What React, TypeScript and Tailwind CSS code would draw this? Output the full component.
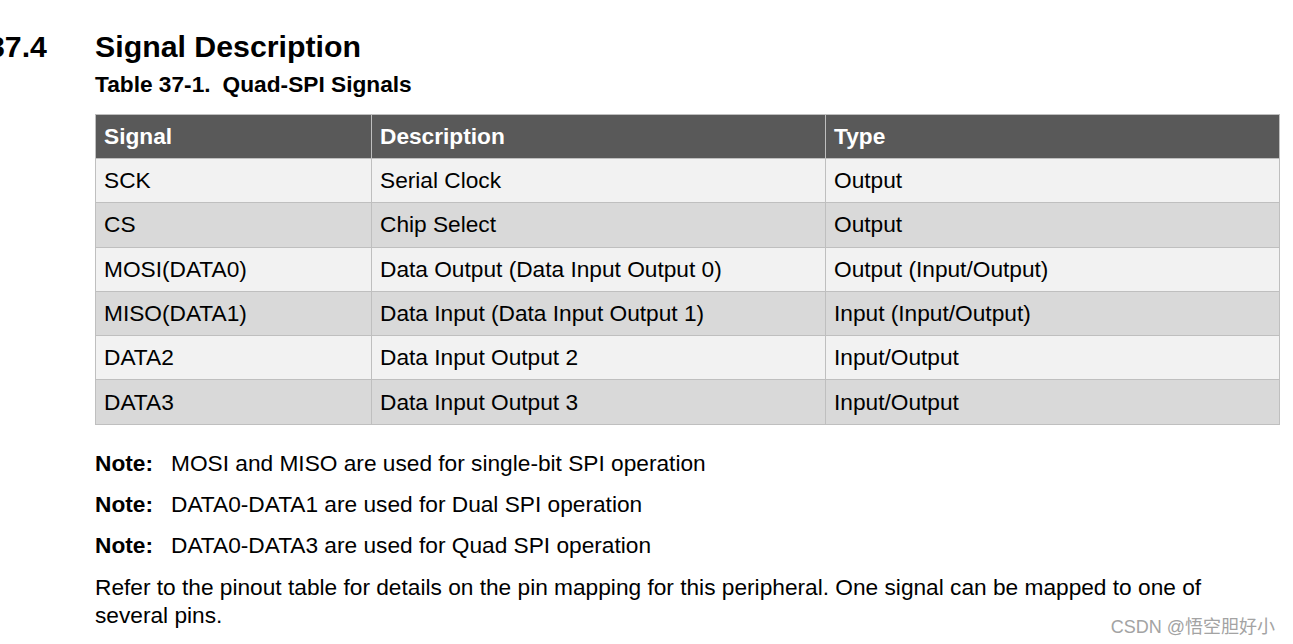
import React from 'react';

const rows = [
  ['SCK', 'Serial Clock', 'Output'],
  ['CS', 'Chip Select', 'Output'],
  ['MOSI(DATA0)', 'Data Output (Data Input Output 0)', 'Output (Input/Output)'],
  ['MISO(DATA1)', 'Data Input (Data Input Output 1)', 'Input (Input/Output)'],
  ['DATA2', 'Data Input Output 2', 'Input/Output'],
  ['DATA3', 'Data Input Output 3', 'Input/Output'],
];

const notes = [
  'MOSI and MISO are used for single-bit SPI operation',
  'DATA0-DATA1 are used for Dual SPI operation',
  'DATA0-DATA3 are used for Quad SPI operation',
];

const App = () => {
  return (
    <div className="relative w-[1293px] h-[644px] overflow-hidden bg-white text-black font-['Liberation_Sans',Arial,sans-serif]">
      <div className="flex items-start pt-[32px]">
        <div className="ml-[-12px] w-[107px] text-[30.3px] leading-[30px] font-bold">37.4</div>
        <div className="text-[30.3px] leading-[30px] font-bold">Signal Description</div>
      </div>

      <div className="ml-[95px] w-[1184px]">
        <div className="mt-[11px] text-[22.7px] leading-[22.7px] font-bold">
          Table 37-1.<span className="ml-[12px]">Quad-SPI Signals</span>
        </div>

        <table className="mt-[18px] w-[1184px] table-fixed border-collapse text-[22.7px]">
          <colgroup>
            <col className="w-[276px]" />
            <col className="w-[454px]" />
            <col className="w-[454px]" />
          </colgroup>
          <thead>
            <tr className="h-[44.3px] bg-[#595959] text-white">
              <th className="border border-[#bfbfbf] px-[8px] pb-[1px] text-left font-bold">Signal</th>
              <th className="border border-[#bfbfbf] px-[8px] pb-[1px] text-left font-bold">Description</th>
              <th className="border border-[#bfbfbf] px-[8px] pb-[1px] text-left font-bold">Type</th>
            </tr>
          </thead>
          <tbody>
            {rows.map((r, i) => (
              <tr key={r[0]} className={i % 2 === 0 ? 'h-[44.3px] bg-[#f2f2f2]' : 'h-[44.3px] bg-[#d9d9d9]'}>
                {r.map((c, j) => (
                  <td key={j} className="border border-[#bfbfbf] px-[8px] pb-[1px] text-left">{c}</td>
                ))}
              </tr>
            ))}
          </tbody>
        </table>

        <div className="mt-[24px] flex flex-col gap-[13.3px] text-[22.7px] leading-[28px]">
          {notes.map((n) => (
            <div key={n} className="flex">
              <span className="w-[76px] shrink-0 font-bold">Note:</span>
              <span>{n}</span>
            </div>
          ))}
          <p className="w-[1120px]">
            Refer to the pinout table for details on the pin mapping for this peripheral. One signal can be mapped to one of
            several pins.
          </p>
        </div>
      </div>

      <div className="absolute right-[18px] bottom-[6px] text-[18px] leading-[22px] text-[#a3a3a3] font-['Liberation_Sans','Noto_Sans_CJK_SC',sans-serif]">
        CSDN @悟空胆好小
      </div>
    </div>
  );
};

export default App;
